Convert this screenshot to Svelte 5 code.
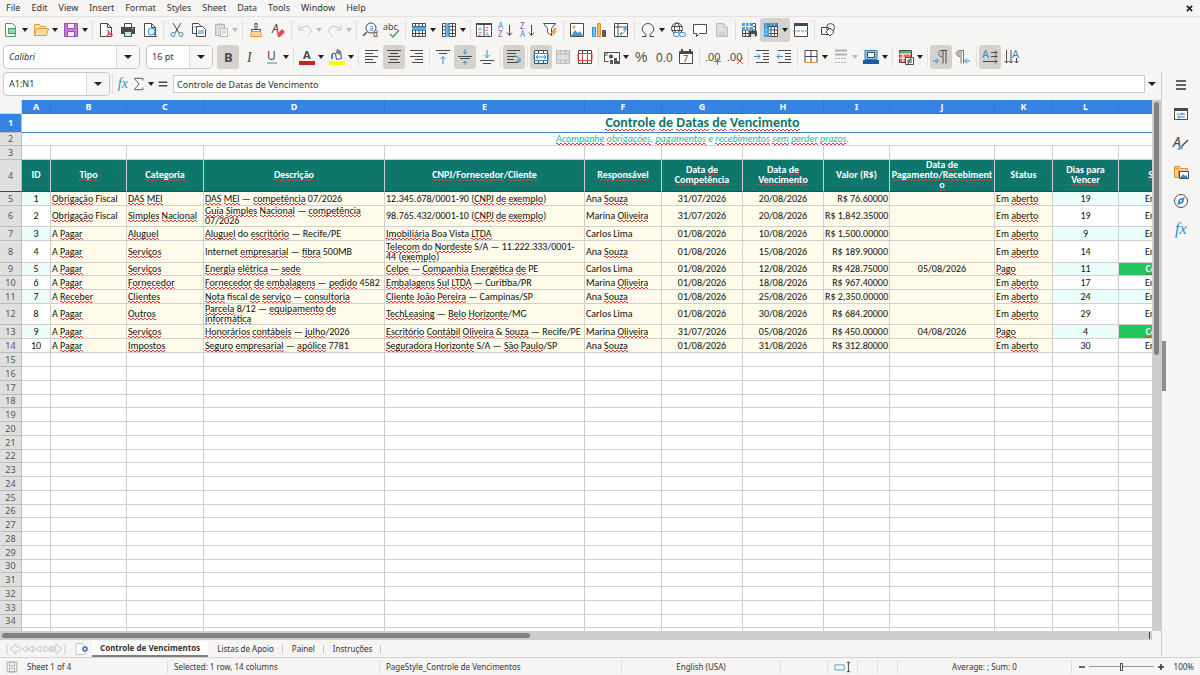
<script>
  const INK = '#4a4a4a';
  const BLUE = '#2f8fd0';

  const line = (d, color = INK, width = 1) =>
    `<path d="${d}" fill="none" stroke="${color}" stroke-width="${width}"/>`;
  const fill = (d, color) => `<path d="${d}" fill="${color}"/>`;
  const shape = (d, color, bg = '#fff') => `<path d="${d}" fill="${bg}" stroke="${color}"/>`;
  const glyph = (x, y, text, color = INK, size = 9, extra = '') =>
    `<text x="${x}" y="${y}" fill="${color}" font-size="${size}" ${extra}>${text}</text>`;

  const PAGE = 'M2.5 1.5h7l4 4v9h-11zM9.5 1.5v4h4';
  const GRID = 'M1.5 1.5h13v13h-13zM1.5 4.5h13M1.5 8h13M1.5 11.5h13M4.5 1.5v13M8 1.5v13M11.5 1.5v13';
  const SANS = 'font-family="Liberation Sans, sans-serif"';

  const icons = {
    new: shape('M2.5 1.5h7l3 3v10h-10z', '#3fa45b') + fill('M5 6h8v6H5z', '#3fa45b') + line('M6 8h6M6 10h6', '#fff'),
    open: shape('M1.5 13.5v-11h5l1 2h5v2', '#e0a03c', '#fbdc9c') + shape('M1.5 13.5l2-7h12l-2 7z', '#e0a03c', '#fbdc9c'),
    save: shape('M1.5 1.5h13v13h-13z', '#9b4fb5', '#c07fd3') + shape('M4.5 1.5h7v5h-7zM4.5 9.5h7v5h-7z', '#9b4fb5', '#fbf5fd'),
    pdf: shape(PAGE, INK) + line('M8 15c3-2 3-4 2-7 0 3 2 4 5 5-3-1-6 0-7 2', '#e5404b', 1.2),
    print: shape('M4.5 1.5h7v4h-7z', INK) + fill('M1 5h14v7H1z', INK) + shape('M4.5 9.5h7v5h-7z', INK, '#cde5f7') + fill('M12 6h1v1h-1z', '#fff'),
    preview: shape(PAGE, INK) + '<circle cx="9.5" cy="9.5" r="3.5" fill="#d8ecfa" stroke="#2f8fd0"/>' + line('M12 12l3 3', BLUE, 1.5),
    cut: line('M4 1l6 10M12 1L6 11') + '<g fill="none" stroke="#2f8fd0"><circle cx="4" cy="12.5" r="2"/><circle cx="12" cy="12.5" r="2"/></g>',
    copy: shape('M1.5 1.5h6l2 2v8h-8z', INK) + shape('M5.5 4.5h6l3 3v7h-9z', INK) + line('M7 9h6M7 11h6M3 5h3', BLUE),
    paste: shape('M2.5 2.5h9v11h-9z', '#b5b5b5', '#dcdcdc') + shape('M7.5 6.5h7v8h-7z', '#b5b5b5') + line('M5 2h4M9 9h4M9 11h4', '#b5b5b5'),
    clone: shape('M7 1.5h2v6H7z', INK) + shape('M3.5 7.5h9v2h-9z', INK, '#fff') + shape('M3.5 9.5h9l1 5h-11z', '#e29b3a', '#fbdc9c'),
    clear: glyph(2, 11, 'A', INK, 12, 'font-style="italic"') + fill('M7 12l5-5 3 3-5 5H8z', '#e84b55'),
    undo: line('M2 3v5h5M2 8c3-5 12-5 12 1 0 2-2 4-4 6', '#c4c4c4'),
    redo: line('M14 3v5H9M14 8c-3-5-12-5-12 1 0 2 2 4 4 6', '#c4c4c4'),
    find: '<circle cx="9" cy="6" r="5" fill="#fff" stroke="#4a4a4a"/>' + line('M5 10l-4 4', INK, 1.5) + glyph(7, 9, 'a', BLUE, 8) + glyph(11, 15, 'd', INK, 8),
    spell: glyph(-1, 8, 'abc', INK, 9) + line('M6 12l3 3 6-7', '#37a867', 1.5),
    row: shape(GRID, INK) + fill('M1 5h14v3H1z', '#65b4ea') + line('M1 5h14M1 8h14', BLUE),
    column: shape(GRID, INK) + fill('M5 1h3v14H5z', '#65b4ea') + line('M4.5 1v14M8 1v14', BLUE),
    sort: shape('M.5 1.5h15v13H.5zM8 1.5v13', INK) + fill('M0 1h16v2H0z', INK) + glyph(2, 9, 'A', BLUE, 6) + glyph(2, 14, 'Z', '#a14fbd', 6) + glyph(9, 9, 'Z', '#a14fbd', 6) + glyph(9, 14, 'A', BLUE, 6),
    asc: glyph(0, 7, 'A', BLUE, 8) + glyph(0, 15, 'Z', '#a14fbd', 8) + line('M11.5 3v10M9 10.5l2.5 3 2.5-3'),
    desc: glyph(0, 7, 'Z', '#a14fbd', 8) + glyph(0, 15, 'A', BLUE, 8) + line('M11.5 3v10M9 10.5l2.5 3 2.5-3'),
    filter: shape('M1.5 1.5h12l-4 5v7l-4-3v-4z', INK) + fill('M12 6h3l-2 3h2l-5 6 1-4H9z', '#efa13b'),
    image: shape('M1.5 1.5h13v13h-13z', INK) + fill('M2 14l4-6 3 3 2-2 3 5z', '#4797d0') + '<circle cx="5" cy="5" r="1.5" fill="#efa13b"/>',
    chart: shape('M1.5 5.5h3v9h-3z', BLUE, '#83c3ef') + shape('M6.5 1.5h3v13h-3z', '#e38a2c', '#f6b568') + fill('M11 8h4v7h-4z', '#5a5a5a'),
    pivot: shape('M1.5 1.5h13v13h-13zM5 1.5v13M1.5 5h13', INK) + line('M7 12c4 0 5-2 5-5M10 8l2-2 2 2M9 10l-2 2 2 2', BLUE),
    omega: line('M2 14.5h4v-2C-1 8 3 1.5 8 1.5S17 8 10 12.5v2h4'),
    link: '<g fill="none" stroke="#4a4a4a"><circle cx="7" cy="6.5" r="5.5"/><ellipse cx="7" cy="6.5" rx="2.5" ry="5.5"/><path d="M2 4.5h10M2 8.5h10"/></g>' + '<g fill="#f6f5f4" stroke="#2f8fd0"><rect x="3.5" y="10.5" width="6" height="4" rx="2"/><rect x="9.5" y="10.5" width="6" height="4" rx="2"/></g>',
    comment: shape('M1.5 2.5h13v9h-7l-3 3v-3h-3z', INK),
    header: shape(PAGE, '#bdbdbd', '#dfdfdf') + line('M5 11h6M5 13h6', '#bdbdbd'),
    printarea: shape(GRID, INK) + fill('M1 1h11v7H1z', '#4aa0df') + line('M1 4.5h11M4.5 1v7M8 1v7', '#fff') + fill('M8 9h8v5H8z', INK) + fill('M10 12h4v3h-4z', '#cde5f7'),
    freeze: shape(GRID, INK) + fill('M1 1h14v3H1zM1 1h5v14H1z', '#2f8fd0') + line('M3 1v14M1 8h5M1 11.5h5M8 1v3M11.5 1v3', '#8fcbf3'),
    split: shape('M1.5 1.5h13v13h-13z', INK) + fill('M1 1h14v3H1z', INK) + '<path d="M0 9h16" stroke="#2f8fd0" stroke-dasharray="3 1"/>',
    draw: shape('M1.5 5.5h7v7h-7z', INK, 'none') + '<circle cx="10.5" cy="5.5" r="4" fill="none" stroke="#4a4a4a"/>' + shape('M10 6l4 4-4 4-4-4z', INK),

    bold: glyph(4, 13, 'B', INK, 13, 'font-weight="700"'),
    italic: glyph(5, 13, 'I', INK, 14, 'font-style="italic" font-family="Liberation Serif, serif"'),
    underline: glyph(3, 11, 'U', INK, 12) + line('M3 14h10', BLUE),
    fontcolor: glyph(4, 10, 'A', INK, 11, 'font-weight="700"') + fill('M0 12h16v4H0z', '#c9211e'),
    highlight: shape('M6.5 4.5l5-2 1 7-5 1z', INK) + line('M8 4V1h2v5M3 10V5l3-1', INK) + line('M3 5v5', BLUE, 2) + fill('M0 12h16v4H0z', '#ffff00'),
    left: line('M1 1.5h13M1 4.5h8M1 7.5h13M1 10.5h8M1 13.5h11'),
    center: line('M1 1.5h14M4 4.5h8M2 7.5h12M4 10.5h8M2 13.5h12'),
    right: line('M2 1.5h13M7 4.5h8M2 7.5h13M7 10.5h8M4 13.5h11'),
    top: line('M1 1.5h14M4 4.5h8') + line('M8 15V7.5M5.5 10L8 7.5l2.5 2.5', BLUE),
    middle: line('M1 7.5h14M3 9.5h10') + line('M8 0v5M6 3l2 2 2-2M8 16v-4M6 14l2-2 2 2', BLUE),
    bottom: line('M1 11.5h14M4 14.5h8') + line('M8 1v7.5M5.5 6L8 8.5 10.5 6', BLUE),
    wrap: line('M1 1.5h13M1 4.5h9M1 7.5h9M1 10.5h7M1 13.5h11') + line('M8 7c4 0 5 2 5 5M10 12l4 1 0-4', BLUE),
    merge: shape('M1.5 1.5h13v13h-13zM1.5 4.5h13M1.5 11.5h13M5.5 1.5v3M10.5 1.5v3M5.5 11.5v3M10.5 11.5v3', INK) + line('M1 4.5h14v7H1zM3 8h10M5 6L3 8l2 2M11 6l2 2-2 2', BLUE),
    mergecells: shape('M1.5 1.5h13v13h-13zM1.5 5h13M1.5 11h13M5.5 1.5v3M10.5 1.5v3M5.5 11v3M10.5 11v3', '#b9b9b9', '#dedede'),
    unmerge: shape('M1.5 1.5h13v13h-13zM1.5 4.5h13M1.5 11.5h13M5.5 1.5v13M10.5 1.5v13', INK) + line('M1 4.5h14v7H1zM5.5 5v7M10.5 5v7', '#e04646'),
    currency: line('M.5 3.5h15v8M.5 3.5v9h4M3 3v2M.5 6h3') + '<circle cx="7" cy="7.5" r="2" fill="#4a4a4a"/>' + fill('M6 11h3v4H6zM10 9h3v6h-3zM13 12h3v3h-3z', '#5a5a5a'),
    percent: glyph(1, 13, '%', INK, 14, SANS),
    number: glyph(0, 13, '0.0', INK, 12, SANS),
    date: shape('M1.5 2.5h13v12h-13z', INK) + line('M1 4h14M4 0v3M12 0v3', INK, 2) + glyph(5, 13, '7', INK, 9),
    adddec: glyph(0, 12, '.00', INK, 11, SANS) + line('M9 12.5h7M12.5 9v7', BLUE),
    deldec: glyph(0, 12, '.00', INK, 11, SANS) + line('M10 9l6 6M16 9l-6 6', '#e5404b'),
    indent: line('M2 1.5h13M9 4.5h6M9 7.5h6M9 10.5h6M2 13.5h13') + line('M0 7.5h6M3.5 5L6 7.5 3.5 10', BLUE),
    outdent: line('M2 1.5h13M9 4.5h6M9 7.5h6M9 10.5h6M2 13.5h13') + line('M1 7.5h6M3.5 5L1 7.5 3.5 10', BLUE),
    border: shape('M2 1.5h12v12H2zM8 1.5v12M2 7.5h12', INK) + line('M1.5 13.5h13', '#e69138'),
    linestyle: line('M2 1.5h12M2 5.5h12', '#b0b0b0', 2) + '<path d="M2 9.5h12M2 13.5h12" stroke="#b0b0b0" stroke-dasharray="2 1"/>',
    bordercolor: shape('M2 1.5h12v9H2z', '#3a7fbd', '#8ac3ec') + shape('M4.5 3.5h7v5h-7z', INK) + fill('M0 11h16v4H0z', '#1c5c9c'),
    conditional: shape('M1.5 1.5h12v12h-12z', INK, '#e8695c') + fill('M2 2h11v3H2z', '#4ab56c') + line('M1 5h12M1 9h7M5 5v8', '#fff') + shape('M7.5 8.5h8v7h-8z', INK) + line('M9 11h5M9 13h5M13 9l-3 6'),
    ltr: line('M14 1.5H9c-5 0-5 6 0 6M10 1.5v13M13 1.5v13') + fill('M9 2c-5 0-5 5 0 5z', '#c0c0c0') + line('M0 12h5M3 9.5L5.5 12 3 14.5', BLUE),
    rtl: line('M9 1.5H5c-5 0-5 6 0 6M6 1.5v13M8.5 1.5v13', '#777') + fill('M5 2c-5 0-5 5 0 5z', '#b5b5b5') + line('M15 12h-5M12 9.5L9.5 12l2.5 2.5', BLUE),
    horizontal: glyph(0, 9, 'A', BLUE, 11) + line('M9 3.5h6M9 7.5h6M1 12.5h14M13 1.5l2 2-2 2M13 5.5l2 2-2 2M13 10.5l2 2-2 2'),
    vertical: glyph(8, 9, 'A', BLUE, 11) + line('M2.5 1v13M7 1v13M12.5 9v5M.5 12l2 2 2-2M5 12l2 2 2-2M10.5 12l2 2 2-2'),

    menu: line('M3 4h10M3 8h10M3 12h10', '#333', 1.5),
    properties: shape('M1.5 2.5h13v11h-13z', INK) + fill('M1 2h14v3H1z', INK) + line('M4 8h8M4 11h8M9 6.5v3M6 9.5v3', BLUE),
    styles: glyph(0, 12, 'A', INK, 14, 'font-style="italic"') + fill('M8 10c-2 0-2 3-4 4 3 2 6 0 6-2z', '#5aa9e0') + line('M9 11l6-6', INK, 1.5),
    gallery: shape('M1.5 13.5v-11h5l1 2h7v2', '#e0903c', '#fbd08c') + shape('M1.5 4.5h4v9h-4z', '#e0903c', '#fbd08c') + shape('M6.5 7.5h9v7h-9z', INK) + fill('M7 14l3-4 2 2 1-1 2 3z', BLUE),
    navigator: '<circle cx="8" cy="8" r="6.5" fill="#fff" stroke="#4a4a4a"/>' + fill('M12 4l-2 6-6 2 2-6z', BLUE) + '<circle cx="8" cy="8" r="1" fill="#fff"/>',
    fx: glyph(2, 12, 'fx', BLUE, 16, 'font-style="italic" font-family="Liberation Serif, serif"'),
    sigma: line('M12.5 4V1.5h-10L8 8l-5.5 6.5h10V12'),
    equals: line('M3 6h10M3 10h10', INK, 1.5),
    floppy: shape('M1.5 1.5h13v13h-13zM4.5 1.5h7v5h-7zM4.5 9.5h7v5h-7z', '#999', '#f6f5f4')
  };

  // "name+" opens a menu, "name!" is switched on, "name-" is disabled
  const standardBar = 'new+ open+ save+ | pdf print preview | cut copy paste+- | clone clear | undo+- redo+- | find spell | row+ column+ | sort asc desc filter | image chart pivot | omega+ link comment header- | printarea freeze+! split | draw';
  const formatBar = 'bold! italic underline+ | fontcolor+ highlight+ | left center! right | top middle! bottom | wrap! | merge! mergecells- unmerge | currency+ percent number date | adddec deldec | indent outdent | border+ linestyle+- bordercolor+ | conditional+ | ltr! rtl | horizontal! vertical';

  function parseBar(bar) {
    return bar.split(' ').map((token) => ({
      name: token.replace(/[+!-]/g, ''),
      menu: token.includes('+'),
      active: token.includes('!'),
      disabled: token.includes('-')
    }));
  }

  const menus = ['File', 'Edit', 'View', 'Insert', 'Format', 'Styles', 'Sheet', 'Data', 'Tools', 'Window', 'Help'];
  const tabs = ['Controle de Vencimentos', 'Listas de Apoio', 'Painel', 'Instruções'];
  const sidebar = ['menu', 'properties', 'styles', 'gallery', 'navigator', 'fx'];

  const columns = [
    { id: 'A', width: 29, head: 'ID' },
    { id: 'B', width: 76, head: 'Tipo' },
    { id: 'C', width: 77, head: 'Categoria' },
    { id: 'D', width: 181, head: 'Descrição' },
    { id: 'E', width: 200, head: 'CNPJ/Fornecedor/Cliente' },
    { id: 'F', width: 77, head: 'Responsável' },
    { id: 'G', width: 81, head: 'Data de Competência' },
    { id: 'H', width: 81, head: 'Data de Vencimento' },
    { id: 'I', width: 66, head: 'Valor (R$)' },
    // the word joiner keeps the slash from being a line break
    { id: 'J', width: 105, head: 'Data de Pagamento/\u2060Recebimento' },
    { id: 'K', width: 58, head: 'Status' },
    { id: 'L', width: 66, head: 'Dias para Vencer' },
    { id: 'M', width: 95, head: 'Situação' },
    { id: 'N', width: 170, head: '' }
  ];
  const tableWidth = columns.reduce((sum, c) => sum + c.width, 22);

  const records = [
    [14, 'Obrigação Fiscal', 'DAS MEI', 'DAS MEI — competência 07/2026', '12.345.678/0001-90 (CNPJ de exemplo)', 'Ana Souza', '31/07/2026', '20/08/2026', '76.60000', '', 19],
    [21, 'Obrigação Fiscal', 'Simples Nacional', 'Guia Simples Nacional — competência 07/2026', '98.765.432/0001-10 (CNPJ de exemplo)', 'Marina Oliveira', '31/07/2026', '20/08/2026', '1,842.35000', '', 19],
    [14, 'A Pagar', 'Aluguel', 'Aluguel do escritório — Recife/PE', 'Imobiliária Boa Vista LTDA', 'Carlos Lima', '01/08/2026', '10/08/2026', '1,500.00000', '', 9],
    [22, 'A Pagar', 'Serviços', 'Internet empresarial — fibra 500MB', 'Telecom do Nordeste S/A — 11.222.333/0001-44 (exemplo)', 'Ana Souza', '01/08/2026', '15/08/2026', '189.90000', '', 14],
    [13, 'A Pagar', 'Serviços', 'Energia elétrica — sede', 'Celpe — Companhia Energética de PE', 'Carlos Lima', '01/08/2026', '12/08/2026', '428.75000', '05/08/2026', 11],
    [14, 'A Pagar', 'Fornecedor', 'Fornecedor de embalagens — pedido 4582', 'Embalagens Sul LTDA — Curitiba/PR', 'Marina Oliveira', '01/08/2026', '18/08/2026', '967.40000', '', 17],
    [14, 'A Receber', 'Clientes', 'Nota fiscal de serviço — consultoria', 'Cliente João Pereira — Campinas/SP', 'Ana Souza', '01/08/2026', '25/08/2026', '2,350.00000', '', 24],
    [21, 'A Pagar', 'Outros', 'Parcela 8/12 — equipamento de informática', 'TechLeasing — Belo Horizonte/MG', 'Carlos Lima', '01/08/2026', '30/08/2026', '684.20000', '', 29],
    [14, 'A Pagar', 'Serviços', 'Honorários contábeis — julho/2026', 'Escritório Contábil Oliveira & Souza — Recife/PE', 'Marina Oliveira', '31/07/2026', '05/08/2026', '450.00000', '04/08/2026', 4],
    [14, 'A Pagar', 'Impostos', 'Seguro empresarial — apólice 7781', 'Seguradora Horizonte S/A — São Paulo/SP', 'Ana Souza', '01/08/2026', '31/08/2026', '312.80000', '', 30]
  ].map(([height, type, category, desc, party, owner, accrual, due, value, paid, days], i) => ({
    number: i + 5,
    height,
    banded: i % 2 === 0,
    done: paid !== '',
    cells: [i + 1, type, category, desc, party, owner, accrual, due, 'R$ ' + value, paid, paid ? 'Pago' : 'Em aberto', days, paid ? 'Concluído' : 'Em aberto', '']
  }));

  const emptyRows = Array.from({ length: 21 }, (_, i) => ({ number: i + 15, height: i % 4 === 3 ? 13 : 14 }));

  // words the spell checker accepts
  const dictionary = new Set('A Ana Boa Campinas Carlos Curitiba Data Dias Em Fiscal ID Internet Lima MB MG Marina PE PR R Recife S SP Status Valor Vista do e fiscal para'.split(' '));

  const words = (text) => String(text).split(/(\p{L}+)/u);
  const misspelled = (word, i) => i % 2 === 1 && !dictionary.has(word);

  let fontName = 'Calibri';
  let fontSize = '16 pt';
  let cellRef = 'A1:N1';
  let formula = 'Controle de Datas de Vencimento';
  let zoom = 50;
</script>

{#snippet icon(name)}
  <svg class="icon" viewBox="0 0 16 16" aria-hidden="true">{@html icons[name]}</svg>
{/snippet}

{#snippet tools(bar)}
  {#each parseBar(bar) as tool}
    {#if tool.name === '|'}
      <span class="divider"></span>
    {:else}
      <button class="tool" class:menu={tool.menu} class:active={tool.active} disabled={tool.disabled} aria-label={tool.name}>
        {@render icon(tool.name)}
        {#if tool.menu}<span class="caret"></span>{/if}
      </button>
    {/if}
  {/each}
{/snippet}

{#snippet checked(text)}{#each words(text) as word, i}{#if misspelled(word, i)}<span class="typo">{word}</span>{:else}{word}{/if}{/each}{/snippet}

<div class="app">
  <nav class="menubar">
    {#each menus as menu}
      <button>{menu}</button>
    {/each}
    <button class="close" aria-label="Close document">
      <svg viewBox="0 0 8 8"><path d="M1 1l6 6M7 1L1 7" stroke="#222" stroke-width="2" /></svg>
    </button>
  </nav>

  <div class="toolbar">{@render tools(standardBar)}</div>

  <div class="toolbar formatting">
    <div class="combo font">
      <input aria-label="Font name" bind:value={fontName} />
      <button aria-label="Font list"><span class="caret"></span></button>
    </div>
    <div class="combo size">
      <input aria-label="Font size" bind:value={fontSize} />
      <button aria-label="Size list"><span class="caret"></span></button>
    </div>
    {@render tools(formatBar)}
  </div>

  <div class="workspace">
    <div class="document">
      <div class="formula-bar">
        <div class="combo name-box">
          <input aria-label="Name box" bind:value={cellRef} />
          <button aria-label="Named ranges"><span class="caret"></span></button>
        </div>
        <span class="divider"></span>
        <button class="fn" aria-label="Function wizard">{@render icon('fx')}</button>
        <button class="fn" aria-label="Select function">{@render icon('sigma')}<span class="caret"></span></button>
        <button class="fn" aria-label="Formula">{@render icon('equals')}</button>
        <input class="formula" aria-label="Input line" bind:value={formula} />
        <button class="expand" aria-label="Expand formula bar"><span class="caret"></span></button>
      </div>

      <div class="sheet">
        <div class="grid">
          <table style:width="{tableWidth}px">
            <colgroup>
              <col class="row-col" />
              {#each columns as column}
                <col style:width="{column.width}px" />
              {/each}
            </colgroup>
            <thead>
              <tr class="letters">
                <th class="corner" aria-label="Select all"></th>
                {#each columns as column}
                  <th scope="col">{column.id}</th>
                {/each}
              </tr>
            </thead>
            <tbody>
              <tr class="title">
                <th scope="row" class="selected">1</th>
                <td colspan="14">{@render checked('Controle de Datas de Vencimento')}</td>
              </tr>
              <tr class="subtitle">
                <th scope="row">2</th>
                <td colspan="14">{@render checked('Acompanhe obrigações, pagamentos e recebimentos sem perder prazos.')}</td>
              </tr>
              <tr class="spacer">
                <th scope="row">3</th>
                {#each columns as column}<td></td>{/each}
              </tr>
              <tr class="heads">
                <th scope="row">4</th>
                {#each columns as column}
                  <td>{@render checked(column.head)}</td>
                {/each}
              </tr>
              {#each records as record}
                <tr class="record" class:banded={record.banded} class:done={record.done} style:height="{record.height}px">
                  <th scope="row">{record.number}</th>
                  {#each record.cells as cell, i}
                    <td class="col-{columns[i].id}">{@render checked(cell)}</td>
                  {/each}
                </tr>
              {/each}
              {#each emptyRows as row}
                <tr style:height="{row.height}px">
                  <th scope="row">{row.number}</th>
                  {#each columns as column}<td></td>{/each}
                </tr>
              {/each}
            </tbody>
          </table>
        </div>
        <div class="scroll vertical"><div class="thumb"></div></div>
        <div class="scroll horizontal"><div class="thumb"></div><div class="grip"></div></div>
      </div>

      <div class="tabs">
        <svg class="tab-nav" viewBox="0 0 60 12" fill="none" stroke="#c9c9c9">
          <path d="M1 1v10M10 1L4 6l6 5V8h4V4h-4zM21 3l-5 3 5 3zM27 3l-5 3 5 3zM28 3v6M35 3l-5 3 5 3zM38 3l5 3-5 3zM44 3v6M45 3l5 3-5 3zM50 1l6 5-6 5V8h-3V4h3zM59 1v10" />
        </svg>
        <button class="add" aria-label="Add sheet">
          <svg viewBox="0 0 12 12"><path d="M1 .5h6l3 3v8H1z" fill="#fff" stroke="#c4c4c4" /><circle cx="10" cy="6" r="2" fill="none" stroke="#3a6fb5" stroke-width="1.5" /></svg>
        </button>
        {#each tabs as tab, i}
          <button class="tab" class:current={i === 0}>{tab}</button>
        {/each}
      </div>
    </div>

    <aside class="sidebar">
      <div class="handle"></div>
      {#each sidebar as name}
        <button aria-label={name}>{@render icon(name)}</button>
      {/each}
    </aside>
  </div>

  <footer class="status">
    <div class="sheet-count">{@render icon('floppy')}Sheet 1 of 4</div>
    <div>Selected: 1 row, 14 columns</div>
    <div>PageStyle_Controle de Vencimentos</div>
    <div class="middle">English (USA)</div>
    <div></div>
    <div class="mode">
      <svg viewBox="0 0 20 14" fill="none"><path d="M1 4.5h11v6H1z" stroke="#3f94cf" /><path d="M15 1.5h4M17 1.5v11M15 12.5h4" stroke="#333" /></svg>
    </div>
    <div></div>
    <div></div>
    <div class="middle">Average: ; Sum: 0</div>
    <div class="zoom">
      <button aria-label="Zoom out"><svg viewBox="0 0 8 8"><path d="M1 4h6" stroke="#333" stroke-width="1.5" /></svg></button>
      <input type="range" aria-label="Zoom" min="0" max="100" bind:value={zoom} />
      <button aria-label="Zoom in"><svg viewBox="0 0 8 8"><path d="M1 4h6M4 1v6" stroke="#333" stroke-width="1.5" /></svg></button>
      <span>100%</span>
    </div>
  </footer>
</div>

<style>
  :global(body) {
    margin: 0;
    background: #f6f5f4;
  }

  .app {
    display: flex;
    flex-direction: column;
    height: 100vh;
    overflow: hidden;
    background: #f6f5f4;
    color: #333;
    font: 9px/12px 'Noto Sans', sans-serif;
  }

  button,
  input {
    font: inherit;
    color: inherit;
    margin: 0;
    padding: 0;
    border: none;
    background: none;
    box-sizing: border-box;
  }

  .icon {
    display: block;
    width: 16px;
    height: 16px;
    flex-shrink: 0;
    overflow: visible;
  }

  .caret {
    width: 0;
    border: 3px solid transparent;
    border-top: 4px solid #222;
    border-bottom: 0;
  }

  .divider {
    width: 1px;
    height: 20px;
    margin: 0 2px;
    background: #e2e0de;
    flex-shrink: 0;
  }

  .menubar {
    display: flex;
    align-items: center;
    gap: 11px;
    height: 16px;
    padding: 0 7px 0 6px;
    border-bottom: 1px solid #e4e2e0;
    flex-shrink: 0;
  }

  .close {
    margin-left: auto;
    width: 7px;
  }

  .close svg {
    display: block;
  }

  .toolbar {
    display: flex;
    align-items: center;
    height: 26px;
    flex-shrink: 0;
  }

  .formatting {
    height: 28px;
    padding-left: 3px;
  }

  .tool {
    display: flex;
    align-items: center;
    padding: 0 3px;
    width: 22px;
    height: 24px;
    border-radius: 3px;
    flex-shrink: 0;
  }

  .tool.menu {
    width: 30px;
    gap: 3px;
  }

  .tool.active {
    background: #d5d1cd;
  }

  .tool:disabled .caret {
    border-top-color: #bbb;
  }

  .combo {
    display: flex;
    height: 24px;
    border: 1px solid #cdc7c2;
    border-radius: 4px;
    background: #fff;
    box-sizing: border-box;
    overflow: hidden;
    flex-shrink: 0;
  }

  .combo input {
    flex: 1;
    min-width: 0;
    padding: 0 5px;
    outline: none;
  }

  .combo button {
    width: 23px;
    border-left: 1px solid #dedad7;
    background: #f8f7f6;
    display: flex;
    align-items: center;
    justify-content: center;
  }

  .combo .caret,
  .expand .caret {
    border-width: 4px 4px 0;
  }

  .font {
    width: 137px;
    margin-right: 6px;
    font-style: italic;
  }

  .size {
    width: 67px;
    margin-right: 4px;
  }

  .workspace {
    display: flex;
    flex: 1;
    min-height: 0;
  }

  .document {
    display: flex;
    flex-direction: column;
    flex: 1;
    min-width: 0;
  }

  .formula-bar {
    display: flex;
    align-items: center;
    height: 26px;
    padding: 0 3px 3px;
    flex-shrink: 0;
  }

  .name-box {
    width: 107px;
  }

  .fn {
    display: flex;
    align-items: center;
    gap: 2px;
    padding: 0 1px;
  }

  .fn .icon {
    width: 14px;
    height: 14px;
  }

  .formula {
    flex: 1;
    height: 18px;
    margin-left: 2px;
    padding: 0 3px;
    border: 1px solid #cfcbc8;
    background: #fff;
  }

  .expand {
    display: flex;
    padding: 4px 2px 4px 3px;
  }

  .sheet {
    display: grid;
    grid-template: minmax(0, 1fr) 9px / minmax(0, 1fr) 9px;
    flex: 1;
    min-height: 0;
  }

  .grid {
    overflow: hidden;
    background: #fff;
  }

  table {
    table-layout: fixed;
    border-spacing: 0;
    color: #111;
    font: 10px/10px Carlito, Lato, sans-serif;
  }

  .row-col {
    width: 22px;
  }

  th,
  td {
    padding: 0 1px;
    border-right: 1px solid #cfcfcf;
    border-bottom: 1px solid #cfcfcf;
    overflow: hidden;
  }

  th {
    padding: 0;
    background: #dfdfdf;
    border-color: #bdbdbd;
    color: #555;
    font: 9px/10px 'Noto Sans', sans-serif;
  }

  .letters {
    height: 14px;
  }

  .letters th {
    background: #3584e4;
    border-color: #2f76cc;
    color: #fff;
    font-weight: 700;
  }

  .letters .corner {
    background: #f6f5f4;
    border-color: #d5d5d5;
  }

  .title {
    height: 19px;
  }

  .title .selected {
    background: #3584e4;
    color: #fff;
    font-weight: 700;
  }

  .title td {
    border-bottom-color: #3d7fcb;
    color: #0f766e;
    font-size: 14px;
    line-height: 16px;
    font-weight: 700;
    text-align: center;
  }

  .subtitle {
    height: 13px;
  }

  .subtitle td {
    color: #22b8a8;
    font-style: italic;
    text-align: center;
  }

  .spacer {
    height: 14px;
  }

  .heads {
    height: 32px;
  }

  .heads th {
    border-bottom-color: #444;
  }

  .heads td {
    padding-bottom: 1px;
    background: #0f766e;
    border-bottom-color: #444;
    color: #fff;
    font-weight: 700;
    text-align: center;
    overflow-wrap: anywhere;
  }

  .record td {
    background: #fffbeb;
  }

  .record .col-A,
  .record .col-G,
  .record .col-H,
  .record .col-J,
  .record .col-L,
  .record .col-M {
    text-align: center;
  }

  .record .col-A,
  .record .col-L,
  .record .col-M,
  .record .col-N {
    background: #fff;
  }

  .record.banded .col-A,
  .record.banded .col-L,
  .record.banded .col-M,
  .record.banded .col-N {
    background: #ecfefb;
  }

  .record .col-I {
    text-align: right;
    white-space: nowrap;
  }

  .record.done .col-M {
    background: #22c55e;
    color: #fff;
    font-weight: 700;
  }

  /* red zigzag under words the spell checker rejects */
  .typo {
    background:
      linear-gradient(45deg, transparent 35%, #e33b3b 35% 65%, transparent 65%) 0 100% / 4px 2px repeat-x,
      linear-gradient(-45deg, transparent 35%, #e33b3b 35% 65%, transparent 65%) 2px 100% / 4px 2px repeat-x;
  }

  .scroll {
    display: flex;
    background: #cdcdcd;
    padding: 2px;
  }

  .thumb {
    background: #80807f;
    border-radius: 3px;
  }

  .vertical .thumb {
    width: 5px;
    height: 48%;
  }

  .horizontal {
    align-items: center;
    justify-content: space-between;
  }

  .horizontal .thumb {
    width: 46%;
    height: 5px;
  }

  .grip {
    width: 1px;
    height: 7px;
    background: #444;
  }

  .tabs {
    display: flex;
    align-items: center;
    height: 17px;
    padding-left: 5px;
    font-size: 8px;
    flex-shrink: 0;
  }

  .tab-nav {
    width: 62px;
    height: 12px;
  }

  .add {
    width: 12px;
    height: 12px;
    margin: 0 5px 0 8px;
  }

  .add svg {
    display: block;
    overflow: visible;
  }

  .tab {
    position: relative;
    padding: 0 9px;
    height: 16px;
  }

  .tab:not(.current)::after {
    content: '';
    position: absolute;
    right: 0;
    top: 4px;
    height: 8px;
    border-right: 1px solid #c4c4c4;
  }

  .tab.current {
    padding: 0 8px;
    background: #fff;
    border-bottom: 2px solid #80807f;
    font-weight: 700;
  }

  .sidebar {
    position: relative;
    display: flex;
    flex-direction: column;
    align-items: center;
    gap: 13px;
    width: 39px;
    padding-top: 6px;
    border-left: 1px solid #cdcdcd;
    box-sizing: border-box;
  }

  .handle {
    position: absolute;
    left: 0;
    top: 46%;
    width: 4px;
    height: 50px;
    background: #8d8d8d;
  }

  .status {
    display: grid;
    grid-template-columns: 168fr 212fr 242fr 159fr 47px 30px 20px 20px 174fr 128px;
    align-items: center;
    height: 17px;
    border-top: 1px solid #d4d2d0;
    font-size: 8px;
    flex-shrink: 0;
  }

  .status > div {
    display: flex;
    align-items: center;
    height: 13px;
    padding: 0 6px;
    border-right: 1px solid #e2e0de;
    box-sizing: border-box;
    white-space: nowrap;
  }

  .status > .middle {
    justify-content: center;
  }

  .status .sheet-count {
    gap: 9px;
  }

  .sheet-count .icon {
    width: 12px;
    height: 12px;
  }

  .mode svg {
    width: 20px;
    height: 14px;
  }

  .status .zoom {
    gap: 3px;
    border-right: none;
  }

  .zoom svg {
    display: block;
    width: 8px;
    height: 8px;
  }

  .zoom input {
    appearance: none;
    flex: 1;
    min-width: 0;
    height: 8px;
    background: linear-gradient(#999, #999) center / 100% 1px no-repeat;
  }

  .zoom input::-webkit-slider-thumb {
    appearance: none;
    width: 3px;
    height: 8px;
    border: 1px solid #555;
    background: #f6f5f4;
    box-sizing: border-box;
  }

  .zoom span {
    margin-left: 6px;
  }
</style>
